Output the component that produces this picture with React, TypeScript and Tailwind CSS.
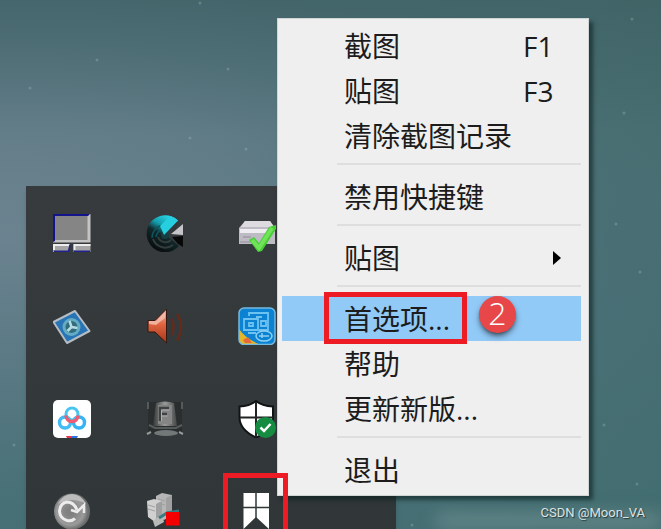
import type { ReactNode } from 'react';

type MenuEntry = { label: string; shortcut?: string; submenu?: boolean; active?: boolean };

const menuGroups: MenuEntry[][] = [
  [{ label: '截图', shortcut: 'F1' }, { label: '贴图', shortcut: 'F3' }, { label: '清除截图记录' }],
  [{ label: '禁用快捷键' }],
  [{ label: '贴图', submenu: true }],
  [{ label: '首选项...', active: true }, { label: '帮助' }, { label: '更新新版...' }],
  [{ label: '退出' }],
];

const stars = [
  [97, 60], [228, 69], [246, 149], [152, 198], [190, 138], [632, 19], [624, 113],
  [640, 272], [616, 224], [200, 3], [30, 88], [14, 445], [637, 484], [604, 425], [412, 525],
];

function Icon({ children }: { children: ReactNode }) {
  return (
    <svg viewBox="0 0 38 38" className="w-[38px] h-[38px]" fill="none" aria-hidden="true">
      {children}
    </svg>
  );
}

const trayIcons: { name: string; marked?: boolean; icon: ReactNode }[] = [
  {
    name: 'Display',
    icon: (
      <Icon>
        <rect width="37.5" height="28.5" fill="#c4c4c4" />
        <path d="M0 28V0h37l-2 2H2v25z" fill="#14148a" />
        <rect x="2" y="2" width="32.5" height="24" fill="#858585" />
        <path d="M0 30h17l-2 8H0zM20.500 30h17v8h-17z" fill="#a5a5a5" />
        <path d="M0 30h16v2H2v4H0zM20.500 30h17v2h-15v4h-2z" fill="#ededed" />
        <path d="M1 37.200h14.500L17 31M21 37.200h16" stroke="#22228c" strokeWidth="1.400" />
      </Icon>
    ),
  },
  {
    name: 'Sensor',
    icon: (
      <Icon>
        <defs>
          <linearGradient id="scope" x1="0.800" y1="0" x2="0.300" y2="1">
            <stop offset="0" stopColor="#2ee0f2" />
            <stop offset="0.350" stopColor="#139cab" />
            <stop offset="0.550" stopColor="#12282b" />
            <stop offset="1" stopColor="#080a0a" />
          </linearGradient>
        </defs>
        <path d="M19 20 32 6.500A18.500 18.500 0 1 0 33 32z" fill="url(#scope)" />
        <path d="M6 24a13 13 0 0 1 13-13M10 23a9 9 0 0 1 9-8" stroke="#0c565f" strokeWidth="1.500" />
        <path d="M7 25a13 13 0 0 0 20 6M12 23a8 8 0 0 0 13 3" stroke="#343d3e" strokeWidth="2" />
        <circle cx="19" cy="21" r="4" fill="#173d42" />
        <path d="m19 20 13-13.500L29 18z" fill="#31373a" />
        <path d="m18 21-4-9L24 2q5 1 8 4.500z" fill="#25cfe0" />
        <path d="M25 20 37 10v11z" fill="#c5c5c8" />
        <path d="m26 23 11-1v11l-5-3z" fill="#070909" />
      </Icon>
    ),
  },
  {
    name: 'Removable drive',
    icon: (
      <Icon>
        <path d="M1 14 7 7h25l5 7v16H1z" fill="#bdbbc3" />
        <path d="M7 7h25l4 6H3z" fill="#dddbe0" />
        <path d="M2 15h34v4H2z" fill="#efedf1" />
        <path d="M2 28h11M5 23h8" stroke="#a19fa8" strokeWidth="1.500" />
        <path d="m11 26 5-3 5 6 10-16 7-2v4L24 37l-4 1z" fill="#49cd37" />
        <path d="m14 26 7 8 13-20" stroke="#6fe458" strokeWidth="4" />
      </Icon>
    ),
  },
  {
    name: 'Graphics',
    icon: (
      <Icon>
        <path d="M.5 15 22 4l14.500 20L14 36z" fill="#2874b5" stroke="#b5bdc4" strokeWidth="2" strokeLinejoin="round" />
        <circle cx="18.500" cy="20" r="9" fill="#64acc4" />
        <circle cx="18.500" cy="20" r="6" fill="#336d7b" />
        <path d="m18.500 20-2-6M18.500 20l6 1M18.500 20l-4 4" stroke="#b6dce3" strokeWidth="2.500" />
      </Icon>
    ),
  },
  {
    name: 'Volume',
    icon: (
      <Icon>
        <defs>
          <linearGradient id="speaker" x1="0" y1="0" x2="0" y2="1">
            <stop offset="0.150" stopColor="#e9a18e" />
            <stop offset="0.450" stopColor="#df6440" />
            <stop offset="1" stopColor="#a63719" />
          </linearGradient>
        </defs>
        <path d="M2 13.500h7L20.500 2v34L9 25H2z" fill="url(#speaker)" stroke="#341812" />
        <path d="M3 17v-3h7L19 5v6l-9 7z" fill="#f5c0b1" fillOpacity="0.800" />
        <path d="M25.500 12q4 7.500 0 16M31 7q8 13 0 26.500" stroke="#652a1a" strokeWidth="2.500" />
      </Icon>
    ),
  },
  {
    name: 'Intel graphics',
    icon: (
      <Icon>
        <rect x="1" y="1" width="36" height="36.500" rx="5" fill="#0b83d2" />
        <path d="M1 22q7 10 21 15.500H6q-5 0-5-5z" fill="#e4b62c" />
        <path d="m5 33 5-3 4 6H7z" fill="#e96a38" />
        <rect x="1" y="1" width="36" height="36.500" rx="5" stroke="#76b9df" strokeWidth="1.500" />
        <path d="M11 9V6h19v17h-9M6 12h14v11H6zM10 26h8M24 10h-6M23 14h5v5h-5zM11 16h4v3h-4z" stroke="#6cc2f0" strokeWidth="1.800" />
        <ellipse cx="26" cy="29" rx="8" ry="5" stroke="#8fd1f4" strokeWidth="1.500" />
        <path d="M21 29h10M24 26v5" stroke="#8fd1f4" strokeWidth="1.500" />
      </Icon>
    ),
  },
  {
    name: 'Netdisk',
    icon: (
      <Icon>
        <rect width="38" height="38" rx="5" fill="#fff" />
        <circle cx="12" cy="22.500" r="5.500" stroke="#42bdf4" strokeWidth="3.500" />
        <circle cx="26" cy="22.500" r="5.500" stroke="#34b4f5" strokeWidth="3.500" />
        <circle cx="19" cy="14" r="6" stroke="#45c5ef" strokeWidth="3" />
        <path d="M13 15.500a6 6 0 0 0 12 0" stroke="#ee5c71" strokeWidth="3.500" />
        <path d="M13 36h6v2h-5z" fill="#e83550" />
        <path d="M19 36h6l-1 2h-5z" fill="#2f70e4" />
      </Icon>
    ),
  },
  {
    name: 'Function key lock',
    icon: (
      <Icon>
        <defs>
          <linearGradient id="keycap">
            <stop stopColor="#353838" />
            <stop offset="0.500" stopColor="#9a9a9a" />
            <stop offset="1" stopColor="#444747" />
          </linearGradient>
        </defs>
        <path d="M2 2h34v32H2z" fill="#2a2e2f" />
        <path d="M10 3q9-3 18 0l3 23H7z" fill="url(#keycap)" />
        <path d="M12 5h14v19H12z" fill="#858585" />
        <path d="M14 21V8h9M14 14h7" stroke="#3f4242" strokeWidth="2.500" />
        <path d="M15.500 21V10h8M15.500 16h6" stroke="#b0b0b0" />
        <path d="M2 2v7M36 2v7M3 25l6 3h21l6-3" stroke="#555a5b" strokeWidth="2" />
        <ellipse cx="20" cy="33" rx="12" ry="3" fill="#727878" />
        <path d="m1 34 4-2M33 32l4 2" stroke="#969999" strokeWidth="2" />
      </Icon>
    ),
  },
  {
    name: 'Security',
    icon: (
      <Icon>
        <path d="M18 1q6 5 17 5.500V18q-1 13-17 19.500Q2 30 1.500 18V6.500Q12 6 18 1z" fill="#fff" stroke="#111414" strokeWidth="2" />
        <path d="M18 2v35M2 17.500h33" stroke="#202425" strokeWidth="2" />
        <circle cx="27.500" cy="27.500" r="10.500" fill="#168c43" />
        <path d="m22.500 27.500 3.500 3.500 6.500-7" stroke="#fff" strokeWidth="2.500" />
      </Icon>
    ),
  },
  {
    name: 'Sync',
    icon: (
      <Icon>
        <defs>
          <radialGradient id="sphere" cx="0.450" cy="0.500">
            <stop offset="0.200" stopColor="#808080" />
            <stop offset="0.750" stopColor="#9b9b9b" />
            <stop offset="1" stopColor="#6b6d6d" />
          </radialGradient>
        </defs>
        <circle cx="19" cy="18.500" r="18" fill="url(#sphere)" />
        <path d="M5 11Q10 1 19 1t14 10Q19 3 5 11z" fill="#bcbcbc" />
        <path d="M22 25.500q-3 3-8 2-7-2-7.500-9Q7 10 14 9q7 0 10 8" stroke="#ececec" strokeWidth="3" />
        <path d="m18 17 6 2 7-7v8" stroke="#ececec" strokeWidth="2.500" />
      </Icon>
    ),
  },
  {
    name: 'Server',
    icon: (
      <Icon>
        <path d="m10 3 6-3 10 2v20l-8 5-8-4z" fill="#b6b6b6" />
        <path d="m1 8 7-2 8 2v18l-7 3-7-5z" fill="#d0d0d0" />
        <path d="m16 8-6 3v17l6-2zM26 2l-6 3v20l6-3z" fill="#a0a0a0" />
        <path d="m2 12 7 2M2 16l7 2M12 6l7 2M12 10l7 2" stroke="#a0a0a0" />
        <path d="m7 28 9-7 2 8-9 5z" fill="#b9b9b9" />
        <path d="m13 25 8-5 12-2" stroke="#367c83" strokeWidth="3" />
        <rect x="20" y="19" width="13.500" height="13.500" fill="#f50000" />
      </Icon>
    ),
  },
  {
    name: 'Snipaste',
    marked: true,
    icon: (
      <Icon>
        <path d="M5.500 0H31v36L18 24 5.500 36z" fill="#fff" />
        <path d="M18 0v25M5 14.500h26" stroke="#31383a" strokeWidth="1.500" />
      </Icon>
    ),
  },
];

function Tray() {
  return (
    <section
      aria-label="Tray"
      className="grid grid-cols-4 auto-rows-[93px] w-[370px] bg-linear-to-b from-[#373b3d] to-[#303638] shadow-md"
    >
      {trayIcons.map((item, i) => (
        <button
          key={item.name}
          aria-label={item.name}
          className={`relative flex items-center justify-center ${i % 3 === 0 ? 'col-start-1' : ''}`}
        >
          {item.icon}
          {item.marked && (
            <span className="absolute top-2 left-3 w-[65px] h-20 border-5 border-[#ed1c24] z-20" />
          )}
        </button>
      ))}
    </section>
  );
}

function MenuItem({ label, shortcut, submenu, active }: MenuEntry) {
  return (
    <button
      role="menuitem"
      className={`relative flex items-center w-full h-[45px] pl-[62px] text-left ${active ? 'bg-[#91c9f7]' : ''}`}
    >
      <span className="flex-1">{label}</span>
      {shortcut && <span className="w-[58px]">{shortcut}</span>}
      {submenu && (
        <svg viewBox="0 0 8 14" className="w-2 h-[14px] mr-5" aria-hidden="true">
          <path d="M0 0l8 7-8 7z" fill="#000" />
        </svg>
      )}
      {active && (
        <>
          <span className="absolute -top-1 left-[42px] w-[143px] h-[52px] border-5 border-[#ed1c24]" />
          <span className="absolute top-0 left-[197px] flex items-center justify-center size-[37px] pb-1 rounded-full bg-[#e84749] text-white text-[32px] font-light shadow-md shadow-black/50">
            2
          </span>
        </>
      )}
    </button>
  );
}

function ContextMenu() {
  return (
    <div
      role="menu"
      className="absolute top-[18px] left-[277px] z-10 w-[312px] pt-1 pb-[3px] pl-1 pr-[7px] bg-[#efefef] border border-[#d2d5d5] text-[28px] leading-8 text-[#1c1c1c] shadow-[4px_4px_4px_rgba(10,30,30,0.6)]"
    >
      {menuGroups.map((group, i) => (
        <div key={i}>
          {i > 0 && (
            <div role="separator" className="flex items-center h-4 pb-1 pl-[55px]">
              <div className="w-full h-[2px] bg-[#dedede]" />
            </div>
          )}
          {group.map(entry => (
            <MenuItem key={entry.label} {...entry} />
          ))}
        </div>
      ))}
    </div>
  );
}

export default function App() {
  return (
    <main className="relative h-screen overflow-hidden pt-[186px] pl-[26px] bg-[radial-gradient(ellipse_at_0%_45%,#708592_0%,#5f7b85_35%,#4a6f74_65%,#426b69_100%)] font-['Open_Sans','Noto_Sans_CJK_SC',sans-serif]">
      {/* Wallpaper */}
      <div className="absolute inset-0 bg-linear-to-b from-[#3c5c61]/50 via-transparent via-25% to-[#42717a]/40" />
      <svg className="absolute inset-0 w-full h-full" aria-hidden="true">
        {stars.map(([x, y]) => (
          <circle key={`${x}-${y}`} cx={x} cy={y} r="1.500" fill="#a8c2c5" opacity="0.300" />
        ))}
      </svg>
      <div className="absolute right-0 bottom-0 w-[225px] h-4 bg-[#819b9d]/50 blur-sm" />

      <div className="relative">
        <Tray />
      </div>
      <ContextMenu />

      <p className="absolute right-4 bottom-2 font-[Roboto,sans-serif] text-[13px] leading-4 text-[#dce3e3] [text-shadow:1px_1px_1px_#26393b]">
        CSDN @Moon_VA
      </p>
    </main>
  );
}
